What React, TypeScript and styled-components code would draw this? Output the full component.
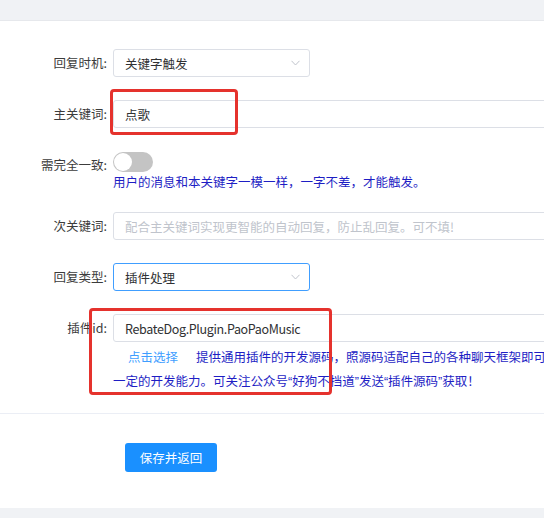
import React from "react";
import styled, { createGlobalStyle } from "styled-components";

const Global = createGlobalStyle`
  html, body { margin: 0; padding: 0; background: #fff; overflow: hidden; }
  body { font-family: "Noto Sans CJK SC", "Noto Sans", sans-serif; }
  * { box-sizing: border-box; }
`;

const Page = styled.div`
  position: relative;
  width: 900px;
  height: 518px;
  display: flex;
  flex-direction: column;
  font-size: 12.5px;
  color: #333;
`;

const GrayBar = styled.div<{ $h: number }>`
  height: ${(p) => p.$h}px;
  background: #f0f2f5;
  flex: none;
`;

const TopBar = styled(GrayBar)`
  border-bottom: 1px solid #e6e8ec;
`;

const Form = styled.div`
  padding-top: 28px;
  display: flex;
  flex-direction: column;
`;

const Row = styled.div<{ $mb: number; $top?: boolean }>`
  display: flex;
  align-items: ${(p) => (p.$top ? "flex-start" : "center")};
  margin-bottom: ${(p) => p.$mb}px;
`;

const Label = styled.label<{ $pt?: number }>`
  width: 113px;
  flex: none;
  text-align: right;
  padding-right: 6px;
  padding-top: ${(p) => p.$pt ?? 0}px;
  color: #3c3c3c;
  line-height: 20px;
`;

const Field = styled.div`
  display: flex;
  flex-direction: column;
`;

const Box = styled.div<{ $w: number; $focus?: boolean }>`
  position: relative;
  width: ${(p) => p.$w}px;
  height: 28px;
  border: 1px solid ${(p) => (p.$focus ? "#409eff" : "#dcdfe6")};
  border-radius: 3px;
  display: flex;
  align-items: center;
  padding: 0 11px;
  color: #303133;
  background: #fff;
`;

const Latin = styled.span`
  letter-spacing: -0.35px;
`;

const Placeholder = styled.span`
  color: #c0c4cc;
`;

const Chevron = styled.svg`
  position: absolute;
  right: 9px;
  top: 10px;
  width: 9px;
  height: 6px;
`;

const Switch = styled.div`
  width: 40px;
  height: 20px;
  border-radius: 10px;
  background: #c4c4c4;
  margin-top: 1px;
  position: relative;
  &::after {
    content: "";
    position: absolute;
    left: 1px;
    top: 1px;
    width: 18px;
    height: 18px;
    border-radius: 50%;
    background: #fff;
  }
`;

const Help = styled.div`
  color: #1e1ec4;
  line-height: 20px;
  white-space: nowrap;
`;

const Notes = styled.div`
  margin-top: 3px;
  line-height: 24px;
  color: #1e1ec4;
  white-space: nowrap;
`;

const Quote = styled.span`
  font-family: "Liberation Sans", sans-serif;
`;

const Link = styled.span`
  color: #409eff;
  padding: 0 18px 0 15px;
  cursor: pointer;
`;

const Divider = styled.div`
  margin-top: 19px;
  height: 1px;
  background: #ebeef5;
`;

const Footer = styled.div`
  padding: 29px 0 0 125px;
  height: 101px;
`;

const Button = styled.button`
  height: 29px;
  width: 92px;
  border: none;
  border-radius: 3px;
  background: #1a90ff;
  color: #fff;
  font-family: inherit;
  font-size: 12.5px;
  padding: 0;
`;

const Mark = styled.div<{ $x: number; $y: number; $w: number; $h: number }>`
  position: absolute;
  left: ${(p) => p.$x}px;
  top: ${(p) => p.$y}px;
  width: ${(p) => p.$w}px;
  height: ${(p) => p.$h}px;
  border: 3px solid #e5322d;
  border-radius: 4px;
  pointer-events: none;
`;

const Arrow = () => (
  <Chevron viewBox="0 0 9 6">
    <path d="M0.5 0.8 L4.5 5 L8.5 0.8" fill="none" stroke="#c0c4cc" strokeWidth="1" />
  </Chevron>
);

export default function App() {
  return (
    <>
      <Global />
      <Page>
        <TopBar $h={21} />
        <Form>
          <Row $mb={23}>
            <Label>回复时机:</Label>
            <Box $w={197}>
              关键字触发
              <Arrow />
            </Box>
          </Row>
          <Row $mb={23}>
            <Label>主关键词:</Label>
            <Box $w={600}>点歌</Box>
          </Row>
          <Row $mb={20} $top>
            <Label $pt={4}>需完全一致:</Label>
            <Field>
              <Switch />
              <Help>用户的消息和本关键字一模一样，一字不差，才能触发。</Help>
            </Field>
          </Row>
          <Row $mb={23}>
            <Label>次关键词:</Label>
            <Box $w={600}>
              <Placeholder>配合主关键词实现更智能的自动回复，防止乱回复。可不填!</Placeholder>
            </Box>
          </Row>
          <Row $mb={23}>
            <Label>回复类型:</Label>
            <Box $w={197} $focus>
              插件处理
              <Arrow />
            </Box>
          </Row>
          <Row $mb={0} $top>
            <Label $pt={4}>插件id:</Label>
            <Field>
              <Box $w={600}>
                <Latin>RebateDog.Plugin.PaoPaoMusic</Latin>
              </Box>
              <Notes>
                <Link>点击选择</Link>
                提供通用插件的开发源码，照源码适配自己的各种聊天框架即可使用，需要有
                <br />
                一定的开发能力。可关注公众号<Quote>“</Quote>好狗不挡道<Quote>”</Quote>发送
                <Quote>“</Quote>插件源码<Quote>”</Quote>获取！
              </Notes>
            </Field>
          </Row>
        </Form>
        <Divider />
        <Footer>
          <Button>保存并返回</Button>
        </Footer>
        <GrayBar $h={10} />
        <Mark $x={110} $y={89} $w={128} $h={46} />
        <Mark $x={89} $y={308} $w={243} $h={87} />
      </Page>
    </>
  );
}
